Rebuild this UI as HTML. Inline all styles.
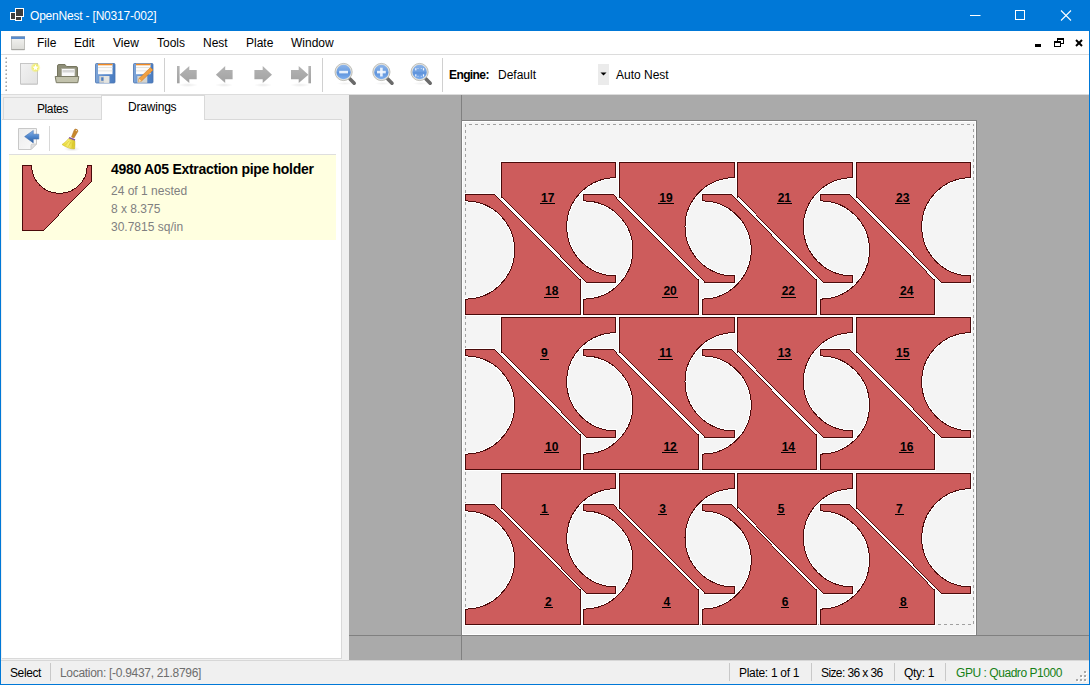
<!DOCTYPE html>
<html><head><meta charset="utf-8">
<style>
*{box-sizing:border-box}
html,body{margin:0;padding:0}
body{width:1090px;height:685px;overflow:hidden;position:relative;background:#F0F0F0;font-family:"Liberation Sans",sans-serif;font-size:12px;color:#000}
.a{position:absolute;white-space:pre}
#title{left:0;top:0;width:1090px;height:31px;background:#0078D7}
#menu{left:1px;top:31px;width:1088px;height:23px;background:#fff}
#menuline{left:1px;top:54px;width:1088px;height:1px;background:#DCDCDC}
#tool{left:1px;top:55px;width:1088px;height:39px;background:#fff}
#toolline{left:1px;top:94px;width:1088px;height:1px;background:#DCDCDC}
.bl{background:#0078D7}
.mi{top:36px;font-size:12px;color:#000}
.sep{width:1px;background:#D0D0D0}
.lbl{position:absolute;font-weight:bold;font-size:12px;line-height:14px;height:13px;padding:0 1px;border-bottom:1px solid #000;white-space:pre}
</style></head><body>
<!-- title bar -->
<div class="a" id="title"></div>
<svg class="a" style="left:0;top:0" width="30" height="30" shape-rendering="crispEdges">
  <rect x="15" y="8" width="9" height="9" fill="#fff"/><rect x="16" y="9" width="7" height="7" fill="#3c3c3c"/>
  <rect x="10" y="12" width="6" height="8" fill="#fff"/><rect x="11" y="13" width="4" height="6" fill="#3c3c3c"/>
  <rect x="15" y="16" width="7" height="5" fill="#fff"/><rect x="16" y="17" width="5" height="3" fill="#3c3c3c"/>
</svg>
<div class="a" style="left:30px;top:9px;color:#fff;font-size:12px;letter-spacing:-0.2px">OpenNest - [N0317-002]</div>
<svg class="a" style="left:960px;top:0" width="130" height="31">
  <line x1="10" y1="15.5" x2="20.5" y2="15.5" stroke="#fff" stroke-width="1"/>
  <rect x="55.5" y="10.5" width="9" height="9" fill="none" stroke="#fff" stroke-width="1"/>
  <line x1="101" y1="10.5" x2="111" y2="20.5" stroke="#fff" stroke-width="1.1"/>
  <line x1="111" y1="10.5" x2="101" y2="20.5" stroke="#fff" stroke-width="1.1"/>
</svg>
<!-- window borders -->
<div class="a bl" style="left:0;top:31px;width:1px;height:654px"></div>
<div class="a bl" style="left:1089px;top:31px;width:1px;height:654px"></div>
<div class="a bl" style="left:0;top:684px;width:1090px;height:1px"></div>

<!-- menu -->
<div class="a" id="menu"></div>
<div class="a" id="menuline"></div>
<svg class="a" style="left:11px;top:36px" width="15" height="15">
  <defs><linearGradient id="gw" x1="0" y1="0" x2="0" y2="1"><stop offset="0" stop-color="#f4f4f2"/><stop offset="1" stop-color="#dcdcd8"/></linearGradient></defs>
  <rect x="0.5" y="0.5" width="13" height="13" fill="url(#gw)" stroke="#c0c0bc" stroke-width="1"/>
  <rect x="0" y="0.5" width="14" height="2.5" fill="#5a8ccc"/>
  <rect x="0.5" y="13" width="13" height="1.2" fill="#a8a8a4"/>
</svg>
<div class="a mi" style="left:37px">File</div>
<div class="a mi" style="left:74px">Edit</div>
<div class="a mi" style="left:113px">View</div>
<div class="a mi" style="left:157px">Tools</div>
<div class="a mi" style="left:203px">Nest</div>
<div class="a mi" style="left:246px">Plate</div>
<div class="a mi" style="left:291px">Window</div>
<svg class="a" style="left:1030px;top:35px" width="58" height="16">
  <rect x="5" y="9" width="6" height="3" fill="#000"/>
  <rect x="27.5" y="3.5" width="6" height="5" fill="none" stroke="#000" stroke-width="1"/>
  <rect x="27" y="3" width="7" height="2" fill="#000"/>
  <rect x="24.5" y="6.5" width="6" height="5" fill="#fff" stroke="#000" stroke-width="1"/>
  <rect x="24" y="6" width="7" height="2" fill="#000"/>
  <line x1="46" y1="5" x2="52" y2="11" stroke="#000" stroke-width="2"/>
  <line x1="52" y1="5" x2="46" y2="11" stroke="#000" stroke-width="2"/>
</svg>

<!-- toolbar -->
<div class="a" id="tool"></div>
<div class="a" id="toolline"></div>
<!-- grip -->
<svg class="a" style="left:5px;top:57px" width="3" height="36">
  <defs><g id="gd"><rect x="0" y="0" width="2" height="2" fill="#C8C8C8"/><rect x="1" y="1" width="1" height="1" fill="#A6A6A6"/><rect x="0" y="0" width="1" height="1" fill="#E4E4E4"/></g></defs>
  <use href="#gd" y="0"/><use href="#gd" y="4"/><use href="#gd" y="8"/><use href="#gd" y="12"/><use href="#gd" y="16"/><use href="#gd" y="20"/><use href="#gd" y="24"/><use href="#gd" y="28"/><use href="#gd" y="32"/>
</svg>
<svg class="a" style="left:0;top:0" width="170" height="95">
  <defs>
    <linearGradient id="gn" x1="0" y1="0" x2="1" y2="1"><stop offset="0" stop-color="#f2f2f2"/><stop offset="1" stop-color="#e2e2e2"/></linearGradient>
    <radialGradient id="gy"><stop offset="0.45" stop-color="#f4f060"/><stop offset="1" stop-color="#f4f060" stop-opacity="0"/></radialGradient>
    <linearGradient id="gb" x1="0" y1="0" x2="1" y2="0"><stop offset="0" stop-color="#7fa6d8"/><stop offset="0.5" stop-color="#5b8bcc"/><stop offset="1" stop-color="#4a7cc0"/></linearGradient>
  </defs>
  <!-- new -->
  <rect x="20.5" y="63.5" width="17" height="20.5" fill="url(#gn)" stroke="#c6c6c6"/>
  <rect x="21" y="84" width="16" height="1" fill="#d0d0d0"/>
  <circle cx="35.5" cy="67.6" r="5.2" fill="url(#gy)"/>
  <path d="M35.5,64.6 L36.4,66.6 L38.5,66.8 L36.9,68.2 L37.4,70.3 L35.5,69.2 L33.6,70.3 L34.1,68.2 L32.5,66.8 L34.6,66.6 Z" fill="#fff"/>
  <!-- open -->
  <path d="M57.5,66 Q57.5,64.5 59,64.5 H65 L66.5,66.5 H76 Q77.5,66.5 77.5,68 V77 H57.5 Z" fill="#8e8e78" stroke="#76765f" stroke-width="1"/>
  <rect x="61.5" y="68.5" width="13.5" height="8" fill="#fafafa" stroke="#a8a89a" stroke-width="0.8"/>
  <rect x="62.5" y="70" width="11.5" height="2.5" fill="#d6d6d6"/>
  <path d="M55.2,76.5 H78.8 L77.8,82.7 H56.3 Z" fill="#c2c2ac" stroke="#7b7b66" stroke-width="1"/>
  <!-- save -->
  <rect x="95.5" y="63.5" width="19.5" height="19.5" rx="1" fill="url(#gb)" stroke="#4a74b0" stroke-width="0.8"/>
  <rect x="98" y="63.8" width="14.5" height="10.4" fill="#fcfcfc"/>
  <rect x="98" y="63.8" width="14.5" height="1.5" fill="#f08a24"/>
  <rect x="98" y="67" width="14.5" height="0.8" fill="#dcdcd8"/>
  <rect x="98" y="70.5" width="14.5" height="0.8" fill="#dcdcd8"/>
  <rect x="99.3" y="76" width="10" height="6.8" fill="#d4d4d0"/>
  <rect x="104" y="76" width="5.3" height="6.8" fill="#e4e4e0"/>
  <rect x="101.2" y="77.3" width="2.3" height="3.5" fill="#4a7cc0"/>
  <!-- save as -->
  <rect x="133.5" y="63.5" width="19.5" height="19.5" rx="1" fill="url(#gb)" stroke="#4a74b0" stroke-width="0.8"/>
  <rect x="136" y="63.8" width="14.5" height="10.4" fill="#fcfcfc"/>
  <rect x="136" y="63.8" width="14.5" height="1.5" fill="#f08a24"/>
  <rect x="136" y="67" width="14.5" height="0.8" fill="#dcdcd8"/>
  <rect x="136" y="70.5" width="14.5" height="0.8" fill="#dcdcd8"/>
  <rect x="137.3" y="76" width="10" height="6.8" fill="#d4d4d0"/>
  <path d="M139,78.5 L150.5,67.5 L153,70 L141.5,81 L138.5,82 Z" fill="#f0a040" stroke="#d07a20" stroke-width="0.6"/>
  <path d="M138.4,82.2 L139,78.8 L141.5,81.1 Z" fill="#f4dcb0"/>
</svg>
<div class="a sep" style="left:164px;top:58px;height:34px"></div>
<!-- nav arrows -->
<svg class="a" style="left:170px;top:60px" width="150" height="30">
  <defs><linearGradient id="ga" x1="0" y1="0" x2="0" y2="1"><stop offset="0" stop-color="#b4b4b4"/><stop offset="1" stop-color="#a2a2a2"/></linearGradient>
  <radialGradient id="gs"><stop offset="0" stop-color="#000" stop-opacity="0.08"/><stop offset="1" stop-color="#000" stop-opacity="0"/></radialGradient></defs>
  <g fill="url(#gs)">
    <ellipse cx="18" cy="25" rx="10" ry="2"/><ellipse cx="54" cy="25" rx="9" ry="2"/><ellipse cx="93" cy="25" rx="9" ry="2"/><ellipse cx="130" cy="25" rx="10" ry="2"/>
  </g>
  <g fill="url(#ga)">
    <rect x="7" y="6" width="2.6" height="17.3"/>
    <path d="M9.6,14.7 L19.3,6.1 V10 H26.7 V19.3 H19.3 V23.1 Z"/>
    <path d="M45.9,14.7 L55.2,6.1 V10 H62.6 V19.3 H55.2 V23.1 Z"/>
    <path d="M102,14.7 L92.7,6.1 V10 H84.4 V19.3 H92.7 V23.1 Z"/>
    <path d="M138.4,14.7 L128.7,6.1 V10 H121 V19.3 H128.7 V23.1 Z"/>
    <rect x="138.4" y="6" width="2.6" height="17.3"/>
  </g>
</svg>
<div class="a sep" style="left:322px;top:58px;height:34px"></div>
<!-- zoom icons -->
<svg class="a" style="left:330px;top:59px" width="105" height="30">
  <defs>
    <linearGradient id="gl" x1="0" y1="0" x2="0" y2="1"><stop offset="0" stop-color="#8cb4ea"/><stop offset="0.5" stop-color="#6c9ee0"/><stop offset="0.55" stop-color="#5e92da"/><stop offset="1" stop-color="#7fb0f0"/></linearGradient>
    <radialGradient id="gz"><stop offset="0" stop-color="#000" stop-opacity="0.1"/><stop offset="1" stop-color="#000" stop-opacity="0"/></radialGradient>
    <g id="mag">
      <ellipse cx="15" cy="24.5" rx="8" ry="1.6" fill="url(#gz)" opacity="0.6"/>
      <line x1="20" y1="20" x2="24.2" y2="24.2" stroke="#6a6a6a" stroke-width="3.6" stroke-linecap="round"/>
      <circle cx="13.6" cy="13" r="8.6" fill="#e4e4e0" stroke="#a8a8a0" stroke-width="0.7"/>
      <circle cx="13.6" cy="13" r="7.2" fill="url(#gl)"/>
    </g>
  </defs>
  <use href="#mag"/>
  <rect x="9.2" y="11.8" width="8.8" height="2.6" fill="#f4f8ff" opacity="0.9"/>
  <g transform="translate(37.8,0)">
    <use href="#mag"/>
    <rect x="9.2" y="11.8" width="8.8" height="2.6" fill="#f4f8ff" opacity="0.9"/>
    <rect x="12.3" y="8.7" width="2.6" height="8.8" fill="#f4f8ff" opacity="0.9"/>
  </g>
  <g transform="translate(76,0)">
    <use href="#mag"/>
    <g fill="#f4f8ff"><rect x="9.2" y="9.2" width="1.2" height="2.2"/><rect x="16.9" y="9.2" width="1.2" height="2.2"/><rect x="9.2" y="15.3" width="1.2" height="2.2"/><rect x="16.9" y="15.3" width="1.2" height="2.2"/></g>
    <g fill="#cfe0f8"><rect x="11.5" y="9" width="1" height="1"/><rect x="14.8" y="9" width="1" height="1"/><rect x="11.5" y="16.8" width="1" height="1"/><rect x="14.8" y="16.8" width="1" height="1"/></g>
  </g>
</svg>
<div class="a sep" style="left:442px;top:58px;height:34px"></div>
<div class="a" style="left:449px;top:68px;font-weight:bold;letter-spacing:-0.6px">Engine:</div>
<div class="a" style="left:498px;top:68px">Default</div>
<div class="a" style="left:598px;top:64px;width:11px;height:21px;background:#EBEBEB"></div>
<svg class="a" style="left:600px;top:72px" width="8" height="4"><path d="M0.5,0.5 H6.5 L3.5,3.5 Z" fill="#000"/></svg>
<div class="a" style="left:616px;top:68px">Auto Nest</div>


<!-- left panel -->
<!-- tabs -->
<div class="a" style="left:3px;top:97px;width:99px;height:23px;background:#F0F0F0;border:1px solid #D9D9D9;border-bottom:none"></div>
<div class="a" style="left:37px;top:102px;letter-spacing:-0.4px">Plates</div>
<div class="a" style="left:101px;top:95px;width:104px;height:26px;background:#fff;border:1px solid #D9D9D9;border-bottom:none"></div>
<div class="a" style="left:128px;top:100px;letter-spacing:-0.2px">Drawings</div>
<!-- panel -->
<div class="a" style="left:2px;top:119px;width:340px;height:540px;background:#fff;border:1px solid #D9D9D9;border-left:none"></div>
<div class="a" style="left:102px;top:119px;width:102px;height:2px;background:#fff"></div>
<!-- sub toolbar -->
<svg class="a" style="left:0;top:0" width="100" height="154">
  <defs>
    <linearGradient id="gp" x1="0" y1="0" x2="1" y2="1"><stop offset="0" stop-color="#ececec"/><stop offset="1" stop-color="#fafafa"/></linearGradient>
    <linearGradient id="gar" x1="0" y1="0" x2="0" y2="1"><stop offset="0" stop-color="#8ab4e8"/><stop offset="0.5" stop-color="#4f86cc"/><stop offset="1" stop-color="#2c5c9e"/></linearGradient>
    <linearGradient id="gbr" x1="0" y1="0" x2="1" y2="0"><stop offset="0" stop-color="#e8d830"/><stop offset="0.5" stop-color="#f6ec70"/><stop offset="1" stop-color="#d8c420"/></linearGradient>
    <radialGradient id="gsh"><stop offset="0" stop-color="#000" stop-opacity="0.12"/><stop offset="1" stop-color="#000" stop-opacity="0"/></radialGradient>
  </defs>
  <path d="M18.5,128.5 H36.5 V144 L31,149.5 H18.5 Z" fill="url(#gp)" stroke="#c8c8c8" stroke-width="1"/>
  <path d="M36.5,144 L31,149.5 V145.5 Q31,144 32.5,144 Z" fill="#e0e0e0" stroke="#c8c8c8" stroke-width="0.8"/>
  <path d="M24.6,136.6 L33.3,130.4 V134.2 H38.8 V139.1 H33.3 V142.9 Z" fill="url(#gar)" stroke="#3a6aac" stroke-width="0.5"/>
  <ellipse cx="72" cy="149" rx="8" ry="2.5" fill="url(#gsh)"/>
  <path d="M75.5,129 Q78.5,129.5 77.8,131.5 L74,138 L71.5,137 L74,130.5 Q74.5,129 75.5,129 Z" fill="#c8882c" stroke="#a86a20" stroke-width="0.5"/>
  <circle cx="76.3" cy="130.6" r="0.6" fill="#fff"/>
  <path d="M69.3,137 L75.3,139.3 L74.8,141 L68.6,138.6 Z" fill="#8050a0"/>
  <path d="M68.6,138.6 L74.8,141 C75,144 75,147 74.5,149 C71,149 66,147.5 62,144.5 C64.5,143 66.8,141 68.6,138.6 Z" fill="url(#gbr)" stroke="#c8b420" stroke-width="0.5"/>
  <path d="M69,141 L65,145.5 M71,142 L68,147 M73,142.5 L72,148" stroke="#d0bc20" stroke-width="0.5"/>
</svg>
<div class="a sep" style="left:49px;top:126px;height:25px;background:#D8D8D8"></div>
<div class="a" style="left:9px;top:154px;width:327px;height:86px;background:#FFFFE0;border-top:1px solid #DEDEDE"></div>
<svg class="a" style="left:0;top:150px" width="100" height="90">
  <g shape-rendering="crispEdges"><path d="M22.5,15.5 H31.6 A27.85,27.85 0 0 0 87.3,15.5 H91.5 V31.5 L42.9,80.5 H22.5 Z" fill="#CD5C5C"/>
  <path d="M42.9,80.5 H22.5 V15.5 H31.6 A27.85,27.85 0 0 0 87.3,15.5 H91.5 V31.5" fill="none" stroke="#4A0A0A" stroke-width="1" stroke-linecap="square"/>
  <path d="M91.2,31 L92.2,31 L43.4,81 L42.4,81 Z" fill="#4A0A0A"/></g>
</svg>
<div class="a" style="left:111px;top:161px;font-weight:bold;font-size:14px;letter-spacing:-0.3px">4980 A05 Extraction pipe holder</div>
<div class="a" style="left:111px;top:184px;color:#808080">24 of 1 nested</div>
<div class="a" style="left:111px;top:202px;color:#808080">8 x 8.375</div>
<div class="a" style="left:111px;top:220px;color:#808080">30.7815 sq/in</div>


<!-- canvas -->
<div class="a" style="left:349px;top:95px;width:740px;height:565px;background:#AAAAAA"></div>
<svg class="a" style="left:0;top:0" width="1090" height="685">
  <defs>
    <clipPath id="cv"><rect x="349" y="95" width="740" height="565"/></clipPath>
    <path id="pA" d="M0,0 H114.44 V15.2 A49.1,49.1 0 0 0 114.44,113.4 V119.8 H85.8 L0,34 Z"/>
    <g id="pAg"><path d="M0,0 H114.44 V15.2 A49.1,49.1 0 0 0 114.44,113.4 V119.8 H85.8 L0,34 Z" fill="#CD5C5C"/><path d="M0,34.5 V0 H114.44 V15.2 A49.1,49.1 0 0 0 114.44,113.4 V119.8 H85.3" fill="none" stroke="#4A0A0A" stroke-width="1" stroke-linecap="square"/><path d="M-0.5,33.8 L0.5,33.8 L86.3,120.3 L85.3,120.3 Z" fill="#4A0A0A"/></g>
  </defs>
  <g clip-path="url(#cv)">
    <rect x="461" y="120" width="516" height="516" fill="#808080"/>
    <rect x="462" y="121" width="514" height="514" fill="#FFFFFF"/>
    <rect x="463" y="122" width="512" height="512" fill="#F4F4F4"/>
    <rect x="461" y="95" width="1" height="565" fill="#808080"/>
    <rect x="349" y="635" width="740" height="1" fill="#808080"/>
    <path d="M465,124h1v1h-1zM469,124h3v1h-3zM475,124h3v1h-3zM481,124h3v1h-3zM487,124h3v1h-3zM493,124h3v1h-3zM499,124h3v1h-3zM505,124h3v1h-3zM511,124h3v1h-3zM517,124h3v1h-3zM523,124h3v1h-3zM529,124h3v1h-3zM535,124h3v1h-3zM541,124h3v1h-3zM547,124h3v1h-3zM553,124h3v1h-3zM559,124h3v1h-3zM565,124h3v1h-3zM571,124h3v1h-3zM577,124h3v1h-3zM583,124h3v1h-3zM589,124h3v1h-3zM595,124h3v1h-3zM601,124h3v1h-3zM607,124h3v1h-3zM613,124h3v1h-3zM619,124h3v1h-3zM625,124h3v1h-3zM631,124h3v1h-3zM637,124h3v1h-3zM643,124h3v1h-3zM649,124h3v1h-3zM655,124h3v1h-3zM661,124h3v1h-3zM667,124h3v1h-3zM673,124h3v1h-3zM679,124h3v1h-3zM685,124h3v1h-3zM691,124h3v1h-3zM697,124h3v1h-3zM703,124h3v1h-3zM709,124h3v1h-3zM715,124h3v1h-3zM721,124h3v1h-3zM727,124h3v1h-3zM733,124h3v1h-3zM739,124h3v1h-3zM745,124h3v1h-3zM751,124h3v1h-3zM757,124h3v1h-3zM763,124h3v1h-3zM769,124h3v1h-3zM775,124h3v1h-3zM781,124h3v1h-3zM787,124h3v1h-3zM793,124h3v1h-3zM799,124h3v1h-3zM805,124h3v1h-3zM811,124h3v1h-3zM817,124h3v1h-3zM823,124h3v1h-3zM829,124h3v1h-3zM835,124h3v1h-3zM841,124h3v1h-3zM847,124h3v1h-3zM853,124h3v1h-3zM859,124h3v1h-3zM865,124h3v1h-3zM871,124h3v1h-3zM877,124h3v1h-3zM883,124h3v1h-3zM889,124h3v1h-3zM895,124h3v1h-3zM901,124h3v1h-3zM907,124h3v1h-3zM913,124h3v1h-3zM919,124h3v1h-3zM925,124h3v1h-3zM931,124h3v1h-3zM937,124h3v1h-3zM943,124h3v1h-3zM949,124h3v1h-3zM955,124h3v1h-3zM961,124h3v1h-3zM967,124h3v1h-3zM973,124h1v1h-1zM465,624h2v1h-2zM470,624h3v1h-3zM476,624h3v1h-3zM482,624h3v1h-3zM488,624h3v1h-3zM494,624h3v1h-3zM500,624h3v1h-3zM506,624h3v1h-3zM512,624h3v1h-3zM518,624h3v1h-3zM524,624h3v1h-3zM530,624h3v1h-3zM536,624h3v1h-3zM542,624h3v1h-3zM548,624h3v1h-3zM554,624h3v1h-3zM560,624h3v1h-3zM566,624h3v1h-3zM572,624h3v1h-3zM578,624h3v1h-3zM584,624h3v1h-3zM590,624h3v1h-3zM596,624h3v1h-3zM602,624h3v1h-3zM608,624h3v1h-3zM614,624h3v1h-3zM620,624h3v1h-3zM626,624h3v1h-3zM632,624h3v1h-3zM638,624h3v1h-3zM644,624h3v1h-3zM650,624h3v1h-3zM656,624h3v1h-3zM662,624h3v1h-3zM668,624h3v1h-3zM674,624h3v1h-3zM680,624h3v1h-3zM686,624h3v1h-3zM692,624h3v1h-3zM698,624h3v1h-3zM704,624h3v1h-3zM710,624h3v1h-3zM716,624h3v1h-3zM722,624h3v1h-3zM728,624h3v1h-3zM734,624h3v1h-3zM740,624h3v1h-3zM746,624h3v1h-3zM752,624h3v1h-3zM758,624h3v1h-3zM764,624h3v1h-3zM770,624h3v1h-3zM776,624h3v1h-3zM782,624h3v1h-3zM788,624h3v1h-3zM794,624h3v1h-3zM800,624h3v1h-3zM806,624h3v1h-3zM812,624h3v1h-3zM818,624h3v1h-3zM824,624h3v1h-3zM830,624h3v1h-3zM836,624h3v1h-3zM842,624h3v1h-3zM848,624h3v1h-3zM854,624h3v1h-3zM860,624h3v1h-3zM866,624h3v1h-3zM872,624h3v1h-3zM878,624h3v1h-3zM884,624h3v1h-3zM890,624h3v1h-3zM896,624h3v1h-3zM902,624h3v1h-3zM908,624h3v1h-3zM914,624h3v1h-3zM920,624h3v1h-3zM926,624h3v1h-3zM932,624h3v1h-3zM938,624h3v1h-3zM944,624h3v1h-3zM950,624h3v1h-3zM956,624h3v1h-3zM962,624h3v1h-3zM968,624h3v1h-3zM465,124h1v3h-1zM465,130h1v3h-1zM465,136h1v3h-1zM465,142h1v3h-1zM465,148h1v3h-1zM465,154h1v3h-1zM465,160h1v3h-1zM465,166h1v3h-1zM465,172h1v3h-1zM465,178h1v3h-1zM465,184h1v3h-1zM465,190h1v3h-1zM465,196h1v3h-1zM465,202h1v3h-1zM465,208h1v3h-1zM465,214h1v3h-1zM465,220h1v3h-1zM465,226h1v3h-1zM465,232h1v3h-1zM465,238h1v3h-1zM465,244h1v3h-1zM465,250h1v3h-1zM465,256h1v3h-1zM465,262h1v3h-1zM465,268h1v3h-1zM465,274h1v3h-1zM465,280h1v3h-1zM465,286h1v3h-1zM465,292h1v3h-1zM465,298h1v3h-1zM465,304h1v3h-1zM465,310h1v3h-1zM465,316h1v3h-1zM465,322h1v3h-1zM465,328h1v3h-1zM465,334h1v3h-1zM465,340h1v3h-1zM465,346h1v3h-1zM465,352h1v3h-1zM465,358h1v3h-1zM465,364h1v3h-1zM465,370h1v3h-1zM465,376h1v3h-1zM465,382h1v3h-1zM465,388h1v3h-1zM465,394h1v3h-1zM465,400h1v3h-1zM465,406h1v3h-1zM465,412h1v3h-1zM465,418h1v3h-1zM465,424h1v3h-1zM465,430h1v3h-1zM465,436h1v3h-1zM465,442h1v3h-1zM465,448h1v3h-1zM465,454h1v3h-1zM465,460h1v3h-1zM465,466h1v3h-1zM465,472h1v3h-1zM465,478h1v3h-1zM465,484h1v3h-1zM465,490h1v3h-1zM465,496h1v3h-1zM465,502h1v3h-1zM465,508h1v3h-1zM465,514h1v3h-1zM465,520h1v3h-1zM465,526h1v3h-1zM465,532h1v3h-1zM465,538h1v3h-1zM465,544h1v3h-1zM465,550h1v3h-1zM465,556h1v3h-1zM465,562h1v3h-1zM465,568h1v3h-1zM465,574h1v3h-1zM465,580h1v3h-1zM465,586h1v3h-1zM465,592h1v3h-1zM465,598h1v3h-1zM465,604h1v3h-1zM465,610h1v3h-1zM465,616h1v3h-1zM465,622h1v3h-1zM973,124h1v2h-1zM973,129h1v3h-1zM973,135h1v3h-1zM973,141h1v3h-1zM973,147h1v3h-1zM973,153h1v3h-1zM973,159h1v3h-1zM973,165h1v3h-1zM973,171h1v3h-1zM973,177h1v3h-1zM973,183h1v3h-1zM973,189h1v3h-1zM973,195h1v3h-1zM973,201h1v3h-1zM973,207h1v3h-1zM973,213h1v3h-1zM973,219h1v3h-1zM973,225h1v3h-1zM973,231h1v3h-1zM973,237h1v3h-1zM973,243h1v3h-1zM973,249h1v3h-1zM973,255h1v3h-1zM973,261h1v3h-1zM973,267h1v3h-1zM973,273h1v3h-1zM973,279h1v3h-1zM973,285h1v3h-1zM973,291h1v3h-1zM973,297h1v3h-1zM973,303h1v3h-1zM973,309h1v3h-1zM973,315h1v3h-1zM973,321h1v3h-1zM973,327h1v3h-1zM973,333h1v3h-1zM973,339h1v3h-1zM973,345h1v3h-1zM973,351h1v3h-1zM973,357h1v3h-1zM973,363h1v3h-1zM973,369h1v3h-1zM973,375h1v3h-1zM973,381h1v3h-1zM973,387h1v3h-1zM973,393h1v3h-1zM973,399h1v3h-1zM973,405h1v3h-1zM973,411h1v3h-1zM973,417h1v3h-1zM973,423h1v3h-1zM973,429h1v3h-1zM973,435h1v3h-1zM973,441h1v3h-1zM973,447h1v3h-1zM973,453h1v3h-1zM973,459h1v3h-1zM973,465h1v3h-1zM973,471h1v3h-1zM973,477h1v3h-1zM973,483h1v3h-1zM973,489h1v3h-1zM973,495h1v3h-1zM973,501h1v3h-1zM973,507h1v3h-1zM973,513h1v3h-1zM973,519h1v3h-1zM973,525h1v3h-1zM973,531h1v3h-1zM973,537h1v3h-1zM973,543h1v3h-1zM973,549h1v3h-1zM973,555h1v3h-1zM973,561h1v3h-1zM973,567h1v3h-1zM973,573h1v3h-1zM973,579h1v3h-1zM973,585h1v3h-1zM973,591h1v3h-1zM973,597h1v3h-1zM973,603h1v3h-1zM973,609h1v3h-1zM973,615h1v3h-1zM973,621h1v3h-1z" fill="#A0A0A0"/>
    <g fill="none" stroke="#FFFFFF" stroke-width="3" shape-rendering="crispEdges">
<use href="#pA" class="halo" x="501.30" y="162.50"/>
<use href="#pA" class="halo" transform="translate(580.04,314.30) rotate(180)"/>
<use href="#pA" class="halo" x="619.63" y="162.50"/>
<use href="#pA" class="halo" transform="translate(698.34,314.30) rotate(180)"/>
<use href="#pA" class="halo" x="737.96" y="162.50"/>
<use href="#pA" class="halo" transform="translate(816.64,314.30) rotate(180)"/>
<use href="#pA" class="halo" x="856.29" y="162.50"/>
<use href="#pA" class="halo" transform="translate(934.94,314.30) rotate(180)"/>
<use href="#pA" class="halo" x="501.30" y="317.50"/>
<use href="#pA" class="halo" transform="translate(580.04,469.30) rotate(180)"/>
<use href="#pA" class="halo" x="619.63" y="317.50"/>
<use href="#pA" class="halo" transform="translate(698.34,469.30) rotate(180)"/>
<use href="#pA" class="halo" x="737.96" y="317.50"/>
<use href="#pA" class="halo" transform="translate(816.64,469.30) rotate(180)"/>
<use href="#pA" class="halo" x="856.29" y="317.50"/>
<use href="#pA" class="halo" transform="translate(934.94,469.30) rotate(180)"/>
<use href="#pA" class="halo" x="501.30" y="473.50"/>
<use href="#pA" class="halo" transform="translate(580.04,624.30) rotate(180)"/>
<use href="#pA" class="halo" x="619.63" y="473.50"/>
<use href="#pA" class="halo" transform="translate(698.34,624.30) rotate(180)"/>
<use href="#pA" class="halo" x="737.96" y="473.50"/>
<use href="#pA" class="halo" transform="translate(816.64,624.30) rotate(180)"/>
<use href="#pA" class="halo" x="856.29" y="473.50"/>
<use href="#pA" class="halo" transform="translate(934.94,624.30) rotate(180)"/>
    </g>
    <g shape-rendering="crispEdges">
<use href="#pAg" x="501.30" y="162.50"/>
<use href="#pAg" transform="translate(580.04,314.30) rotate(180)"/>
<use href="#pAg" x="619.63" y="162.50"/>
<use href="#pAg" transform="translate(698.34,314.30) rotate(180)"/>
<use href="#pAg" x="737.96" y="162.50"/>
<use href="#pAg" transform="translate(816.64,314.30) rotate(180)"/>
<use href="#pAg" x="856.29" y="162.50"/>
<use href="#pAg" transform="translate(934.94,314.30) rotate(180)"/>
<use href="#pAg" x="501.30" y="317.50"/>
<use href="#pAg" transform="translate(580.04,469.30) rotate(180)"/>
<use href="#pAg" x="619.63" y="317.50"/>
<use href="#pAg" transform="translate(698.34,469.30) rotate(180)"/>
<use href="#pAg" x="737.96" y="317.50"/>
<use href="#pAg" transform="translate(816.64,469.30) rotate(180)"/>
<use href="#pAg" x="856.29" y="317.50"/>
<use href="#pAg" transform="translate(934.94,469.30) rotate(180)"/>
<use href="#pAg" x="501.30" y="473.50"/>
<use href="#pAg" transform="translate(580.04,624.30) rotate(180)"/>
<use href="#pAg" x="619.63" y="473.50"/>
<use href="#pAg" transform="translate(698.34,624.30) rotate(180)"/>
<use href="#pAg" x="737.96" y="473.50"/>
<use href="#pAg" transform="translate(816.64,624.30) rotate(180)"/>
<use href="#pAg" x="856.29" y="473.50"/>
<use href="#pAg" transform="translate(934.94,624.30) rotate(180)"/>
    </g>
  </g>
</svg>
<div class="lbl" style="left:540.0px;top:191px;height:13px">17</div>
<div class="lbl" style="left:544.1px;top:284px;height:14px">18</div>
<div class="lbl" style="left:658.3px;top:191px;height:13px">19</div>
<div class="lbl" style="left:662.4px;top:284px;height:14px">20</div>
<div class="lbl" style="left:776.7px;top:191px;height:13px">21</div>
<div class="lbl" style="left:780.7px;top:284px;height:14px">22</div>
<div class="lbl" style="left:895.0px;top:191px;height:13px">23</div>
<div class="lbl" style="left:899.0px;top:284px;height:14px">24</div>
<div class="lbl" style="left:540.0px;top:346px;height:14px">9</div>
<div class="lbl" style="left:544.1px;top:440px;height:13px">10</div>
<div class="lbl" style="left:658.3px;top:346px;height:14px">11</div>
<div class="lbl" style="left:662.4px;top:440px;height:13px">12</div>
<div class="lbl" style="left:776.7px;top:346px;height:14px">13</div>
<div class="lbl" style="left:780.7px;top:440px;height:13px">14</div>
<div class="lbl" style="left:895.0px;top:346px;height:14px">15</div>
<div class="lbl" style="left:899.0px;top:440px;height:13px">16</div>
<div class="lbl" style="left:540.0px;top:502px;height:13px">1</div>
<div class="lbl" style="left:544.1px;top:595px;height:13px">2</div>
<div class="lbl" style="left:658.3px;top:502px;height:13px">3</div>
<div class="lbl" style="left:662.4px;top:595px;height:13px">4</div>
<div class="lbl" style="left:776.7px;top:502px;height:13px">5</div>
<div class="lbl" style="left:780.7px;top:595px;height:13px">6</div>
<div class="lbl" style="left:895.0px;top:502px;height:13px">7</div>
<div class="lbl" style="left:899.0px;top:595px;height:13px">8</div>

<!-- status bar -->
<div class="a" style="left:1px;top:660px;width:1088px;height:1px;background:#D7D7D7"></div>
<div class="a" style="left:1px;top:661px;width:1088px;height:23px;background:#F0F0F0"></div>
<div class="a" style="left:10px;top:666px;letter-spacing:-0.4px">Select</div>
<div class="a sep" style="left:50px;top:663px;height:18px;background:#C8C8C8"></div>
<div class="a" style="left:60px;top:666px;color:#6D6D6D;letter-spacing:-0.3px">Location: [-0.9437, 21.8796]</div>
<div class="a sep" style="left:729px;top:663px;height:18px;background:#C8C8C8"></div>
<div class="a" style="left:739px;top:666px;letter-spacing:-0.3px">Plate: 1 of 1</div>
<div class="a sep" style="left:811px;top:663px;height:18px;background:#C8C8C8"></div>
<div class="a" style="left:821px;top:666px;letter-spacing:-0.6px">Size: 36 x 36</div>
<div class="a sep" style="left:894px;top:663px;height:18px;background:#C8C8C8"></div>
<div class="a" style="left:904px;top:666px;letter-spacing:-0.3px">Qty: 1</div>
<div class="a sep" style="left:945px;top:663px;height:18px;background:#C8C8C8"></div>
<div class="a" style="left:956px;top:666px;color:#168016;letter-spacing:-0.45px">GPU : Quadro P1000</div>
<svg class="a" style="left:1076px;top:671px" width="12" height="12" shape-rendering="crispEdges">
  <g fill="#FFFFFF"><rect x="9" y="1" width="2" height="2"/><rect x="5" y="5" width="2" height="2"/><rect x="9" y="5" width="2" height="2"/><rect x="1" y="9" width="2" height="2"/><rect x="5" y="9" width="2" height="2"/><rect x="9" y="9" width="2" height="2"/></g>
  <g fill="#A8A8A8"><rect x="8" y="0" width="2" height="2"/><rect x="4" y="4" width="2" height="2"/><rect x="8" y="4" width="2" height="2"/><rect x="0" y="8" width="2" height="2"/><rect x="4" y="8" width="2" height="2"/><rect x="8" y="8" width="2" height="2"/></g>
</svg>

</body></html>
